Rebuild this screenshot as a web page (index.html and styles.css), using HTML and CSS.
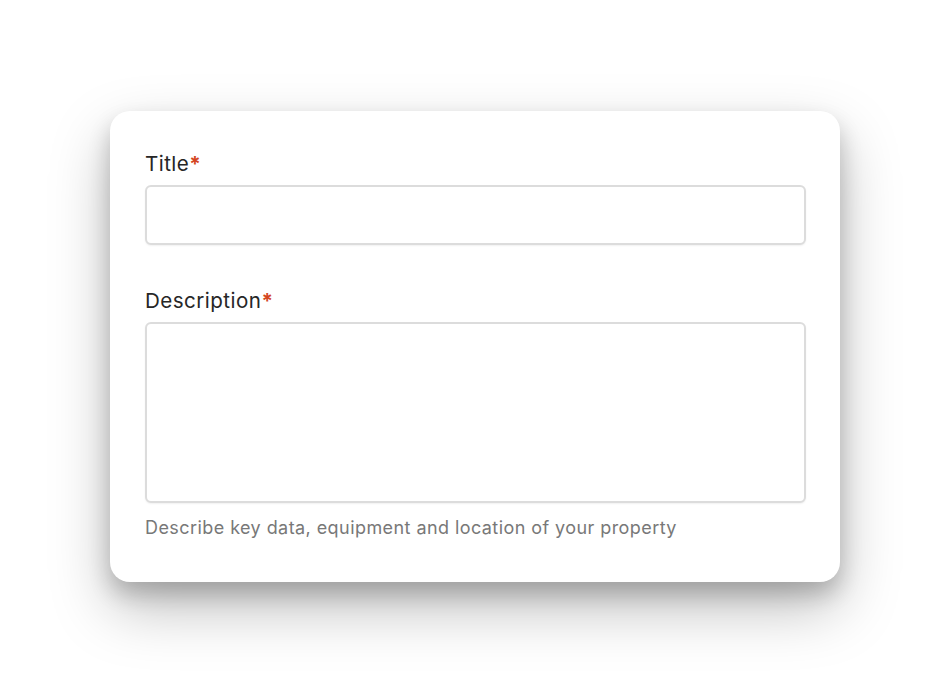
FILE: index.html
```html
<!DOCTYPE html>
<html lang="en">
<head>
<meta charset="utf-8">
<title>Form</title>
<link rel="stylesheet" href="styles.css">
</head>
<body>
<main class="stage">
  <form class="card">
    <div class="field">
      <label class="label" for="title">Title<span class="req">*</span></label>
      <input class="input" id="title" type="text">
    </div>
    <div class="field field-desc">
      <label class="label" for="desc">Description<span class="req">*</span></label>
      <textarea class="textarea" id="desc"></textarea>
      <p class="help">Describe key data, equipment and location of your property</p>
    </div>
  </form>
</main>
</body>
</html>
```

FILE: styles.css
```css
html, body {
  margin: 0;
  padding: 0;
  background: #ffffff;
}
body {
  font-family: Inter, "Noto Sans", "Liberation Sans", sans-serif;
}
.stage {
  height: 692px;
  display: flex;
  align-items: center;
  justify-content: center;
}
.card {
  box-sizing: border-box;
  width: 730px;
  height: 471px;
  background: #ffffff;
  border-radius: 20px;
  padding: 40px 34px 0 35px;
  box-shadow: 0 26px 60px rgba(0, 0, 0, 0.26), 0 12px 22px rgba(0, 0, 0, 0.2);
  display: flex;
  flex-direction: column;
}
.field {
  display: flex;
  flex-direction: column;
}
.field-desc {
  margin-top: 43px;
}
.label {
  font-size: 20.6px;
  line-height: 25px;
  color: #262626;
  margin-bottom: 9px;
  letter-spacing: 0.45px;
}
.req {
  color: #d4461f;
  font-weight: 700;
}
.input, .textarea {
  box-sizing: border-box;
  width: 100%;
  border: 2px solid #dcdcdc;
  border-radius: 6px;
  background: #fff;
  box-shadow: 0 1px 2px rgba(0, 0, 0, 0.06);
  margin: 0;
  font: inherit;
  outline: none;
}
.input {
  height: 60px;
}
.textarea {
  height: 181px;
  resize: none;
  display: block;
}
.help {
  margin: 14px 0 0;
  font-size: 18px;
  line-height: 22px;
  color: #787878;
  letter-spacing: 0.43px;
}
```
